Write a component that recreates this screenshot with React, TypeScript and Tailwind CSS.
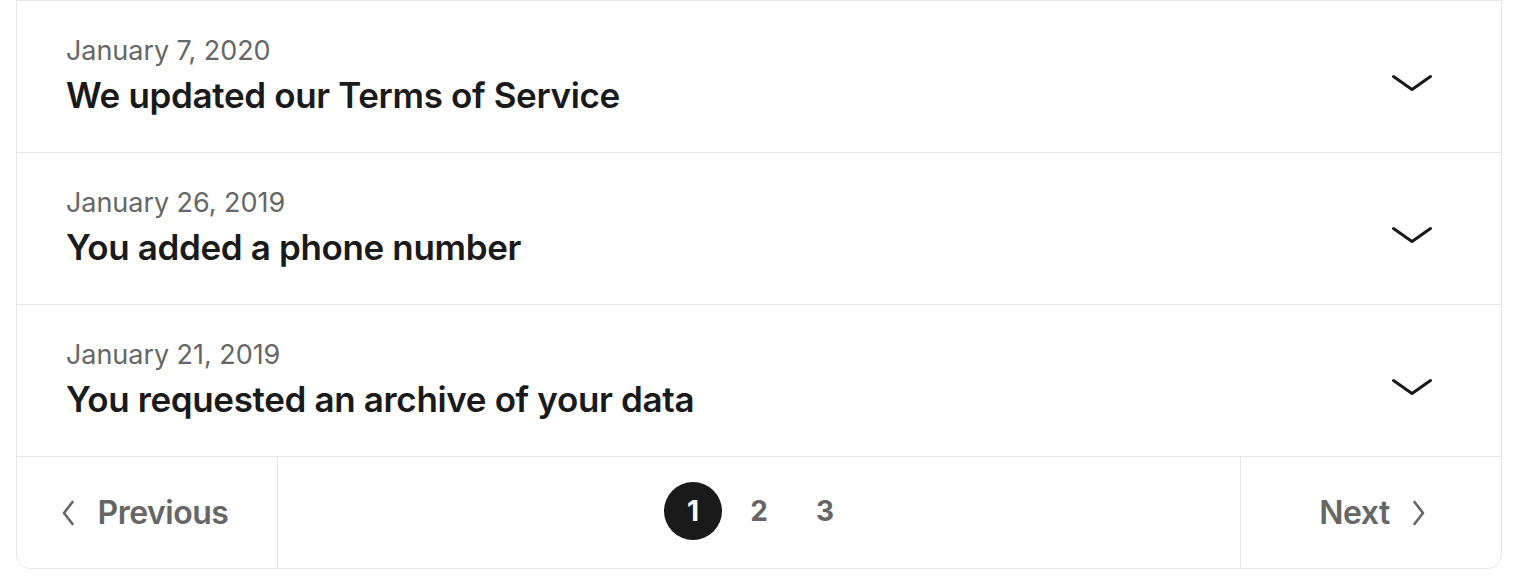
const EVENTS = [
  { date: 'January 7, 2020', title: 'We updated our Terms of Service' },
  { date: 'January 26, 2019', title: 'You added a phone number' },
  { date: 'January 21, 2019', title: 'You requested an archive of your data' },
]

const ChevronDown = () => (
  <svg width="42" height="18" viewBox="0 0 42 18" fill="none" stroke="#1a1a1a" strokeWidth="3" strokeLinecap="round" strokeLinejoin="round">
    <path d="M2.5 2.5L21 15.5L39.5 2.5" />
  </svg>
)

const ChevronLeft = () => (
  <svg width="14" height="26" viewBox="0 0 14 26" fill="none" stroke="#666666" strokeWidth="2.6" strokeLinecap="round" strokeLinejoin="round">
    <path d="M11.5 2L3 13L11.5 24" />
  </svg>
)

const ChevronRight = () => (
  <svg width="14" height="26" viewBox="0 0 14 26" fill="none" stroke="#666666" strokeWidth="2.6" strokeLinecap="round" strokeLinejoin="round">
    <path d="M2.5 2L11 13L2.5 24" />
  </svg>
)

function App() {
  return (
    <div className="h-[582px] bg-white font-['Inter',sans-serif] text-[#1a1a1a]">
      <div className="ml-4 w-[1486px] border border-[#e6e6e6] rounded-b-[14px] bg-white">
        {EVENTS.map((ev, i) => (
          <div key={i} className="flex items-center justify-between h-[152px] pl-[49px] pr-[68px] pb-[3px] border-b border-[#e6e6e6]">
            <div className="flex flex-col">
              <span className="text-[27px] leading-[40px] text-[#666666] tracking-[-0.05px]">{ev.date}</span>
              <span className="text-[35px] leading-[48px] font-semibold tracking-[-0.35px]">{ev.title}</span>
            </div>
            <div className="mt-[15px]"><ChevronDown /></div>
          </div>
        ))}
        {/* Pagination */}
        <div className="flex h-[111px] text-[#666666]">
          <div className="w-[261px] border-r border-[#e6e6e6] flex items-center justify-center gap-[23px] pt-[1px] pr-[5px]">
            <ChevronLeft />
            <span className="text-[32px] font-semibold tracking-[-0.5px]">Previous</span>
          </div>
          <div className="flex-1 flex items-center justify-center gap-[8px] pb-[3px]">
            <span className="w-[58px] h-[58px] rounded-full bg-[#1a1a1a] text-white flex items-center justify-center text-[28px] font-bold">1</span>
            <span className="w-[58px] h-[58px] flex items-center justify-center text-[28px] font-bold">2</span>
            <span className="w-[58px] h-[58px] flex items-center justify-center text-[28px] font-bold">3</span>
          </div>
          <div className="w-[261px] border-l border-[#e6e6e6] flex items-center justify-center gap-[22px] pt-[1px] pl-[3px]">
            <span className="text-[32px] font-semibold tracking-[-0.5px]">Next</span>
            <ChevronRight />
          </div>
        </div>
      </div>
    </div>
  )
}

export default App
